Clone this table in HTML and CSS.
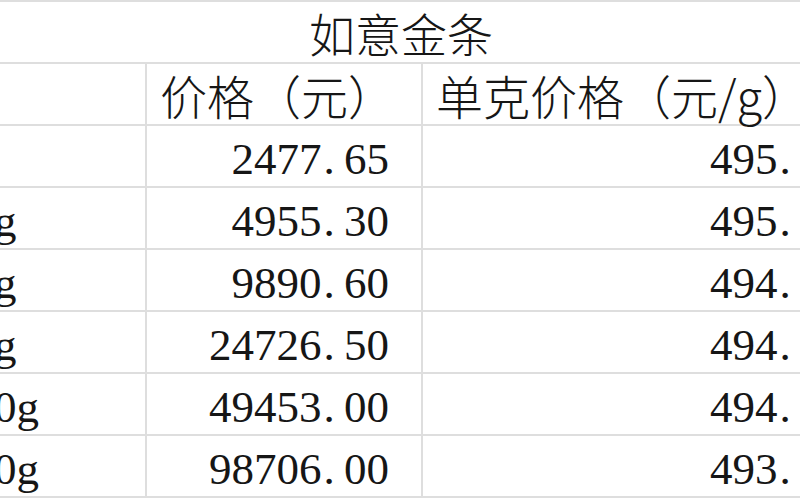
FILE: index.html
```html
<!DOCTYPE html>
<html lang="zh-CN">
<head>
<meta charset="utf-8">
<title>如意金条</title>
<link rel="stylesheet" href="styles.css">
</head>
<body>
<table class="sheet">
  <colgroup>
    <col class="c1"><col class="c2"><col class="c3">
  </colgroup>
  <tr class="title-row"><td colspan="3" class="title">如意金条</td></tr>
  <tr class="head-row"><td class="blank"></td><td class="head">价格（元）</td><td class="head">单克价格（元/g）</td></tr>
  <tr><td class="lbl">5g</td><td class="num">2477<span class="pt">.</span>65</td><td class="num">495<span class="pt">.</span>53</td></tr>
  <tr><td class="lbl">10g</td><td class="num">4955<span class="pt">.</span>30</td><td class="num">495<span class="pt">.</span>53</td></tr>
  <tr><td class="lbl">20g</td><td class="num">9890<span class="pt">.</span>60</td><td class="num">494<span class="pt">.</span>53</td></tr>
  <tr><td class="lbl">50g</td><td class="num">24726<span class="pt">.</span>50</td><td class="num">494<span class="pt">.</span>53</td></tr>
  <tr><td class="lbl">100g</td><td class="num">49453<span class="pt">.</span>00</td><td class="num">494<span class="pt">.</span>53</td></tr>
  <tr><td class="lbl">200g</td><td class="num">98706<span class="pt">.</span>00</td><td class="num">493<span class="pt">.</span>53</td></tr>
</table>
</body>
</html>
```
FILE: styles.css
```css
html, body {
  margin: 0;
  padding: 0;
  background: #ffffff;
  overflow: hidden;
  width: 800px;
  height: 500px;
}

.sheet {
  border-collapse: collapse;
  table-layout: fixed;
  width: 930px;
  margin-left: -53px;
  margin-top: 0;
  color: #161616;
  font-family: "Liberation Serif", "Noto Sans CJK SC", serif;
  font-size: 45px;
}

.c1 { width: 198px; }
.c2 { width: 276px; }
.c3 { width: 456px; }

.sheet td {
  height: 58px;
  padding: 0 0 2px 0;
  border: 2px solid #dedede;
  white-space: nowrap;
  vertical-align: bottom;
  line-height: 50px;
}

.sheet td.title {
  height: 55px;
  text-align: center;
  font-family: "Noto Sans CJK SC", sans-serif;
  font-size: 46px;
  font-weight: 300;
  padding: 0 24px 5px 0;
}

.sheet td.head {
  font-family: "Noto Sans CJK SC", sans-serif;
  font-size: 47px;
  font-weight: 300;
  padding: 0 0 4px 13px;
  height: 56px;
}

.sheet td.blank {
  height: 56px;
  padding-bottom: 4px;
}

.sheet td.lbl {
  padding-left: 0;
}

.sheet td.num {
  text-align: right;
  padding-right: 32px;
}

.pt {
  display: inline-block;
  width: 0.5em;
  text-align: left;
  padding-left: 2px;
  box-sizing: border-box;
}
```
